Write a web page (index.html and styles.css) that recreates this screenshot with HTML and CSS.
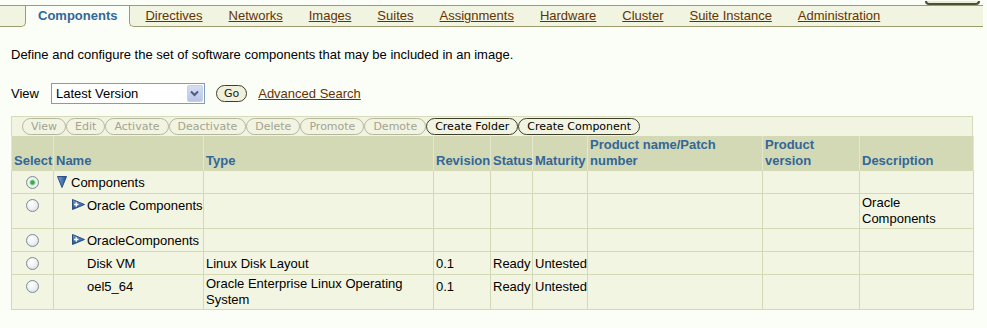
FILE: index.html
```html
<!DOCTYPE html>
<html lang="en">
<head>
    <meta charset="UTF-8">
    <meta name="viewport" content="width=device-width, initial-scale=1.0">
    <title>Components</title>
    <link rel="stylesheet" href="styles.css">
</head>
<body>
    <!-- Global button row (mostly scrolled off the top) -->
    <div class="top-strip"><span class="global-btn"></span></div>

    <!-- Tabs -->
    <nav class="tabs">
        <span class="tab-edge"></span>
        <a class="tab current" href="#">Components</a>
        <a class="tab after-current" href="#">Directives</a>
        <a class="tab" href="#">Networks</a>
        <a class="tab" href="#">Images</a>
        <a class="tab" href="#">Suites</a>
        <a class="tab" href="#">Assignments</a>
        <a class="tab" href="#">Hardware</a>
        <a class="tab" href="#">Cluster</a>
        <a class="tab" href="#">Suite Instance</a>
        <a class="tab" href="#">Administration</a>
        <span class="tab-fill"></span>
    </nav>

    <p class="intro">Define and configure the set of software components that may be included in an image.</p>

    <form class="view-row" onsubmit="return false">
        <label class="view-label" for="view-select">View</label>
        <div class="select-box">
            <select id="view-select">
                <option>Latest Version</option>
                <option>All Versions</option>
            </select>
            <span class="select-arrow">
                <svg width="9" height="7" viewBox="0 0 9 7"><path d="M1 1.5 L4.5 5 L8 1.5" fill="none" stroke="#4d5c7a" stroke-width="2"/></svg>
            </span>
        </div>
        <button class="btn go-btn">Go</button>
        <a class="adv-link" href="#">Advanced Search</a>
    </form>

    <div class="toolbar">
        <button class="btn" disabled>View</button>
        <button class="btn" disabled>Edit</button>
        <button class="btn" disabled>Activate</button>
        <button class="btn" disabled>Deactivate</button>
        <button class="btn" disabled>Delete</button>
        <button class="btn" disabled>Promote</button>
        <button class="btn" disabled>Demote</button>
        <button class="btn">Create Folder</button>
        <button class="btn">Create Component</button>
    </div>

    <table class="grid">
        <colgroup>
            <col style="width:42px">
            <col style="width:150px">
            <col style="width:230px">
            <col style="width:57px">
            <col style="width:42px">
            <col style="width:55px">
            <col style="width:175px">
            <col style="width:97px">
            <col style="width:114px">
        </colgroup>
        <thead>
            <tr>
                <th>Select</th>
                <th>Name</th>
                <th>Type</th>
                <th>Revision</th>
                <th>Status</th>
                <th>Maturity</th>
                <th>Product name/Patch number</th>
                <th>Product version</th>
                <th>Description</th>
            </tr>
        </thead>
        <tbody>
            <tr>
                <td class="sel"><input class="pick" type="radio" name="comp" checked></td>
                <td class="name">
                    <svg class="twisty" width="10" height="12" viewBox="0 0 10 12">
                        <defs><linearGradient id="down-g" x1="0" x2="1"><stop offset="0" stop-color="#7aa3d6"/><stop offset="1" stop-color="#1f4f92"/></linearGradient></defs>
                        <polygon points="0.5,0.5 9.5,0.5 5,11.5" fill="url(#down-g)" stroke="#2a4f86"/>
                    </svg>Components
                </td>
                <td></td><td></td><td></td><td></td><td></td><td></td><td></td>
            </tr>
            <tr>
                <td class="sel"><input class="pick" type="radio" name="comp"></td>
                <td class="name lvl1">
                    <svg class="expand" width="13" height="11" viewBox="0 0 13 11">
                        <defs><linearGradient id="exp-g1" x1="0" y1="0" x2="0" y2="1"><stop offset="0" stop-color="#6f98d0"/><stop offset="1" stop-color="#234f90"/></linearGradient></defs>
                        <polygon points="0.5,0.5 12.5,5.5 0.5,10.5" fill="url(#exp-g1)" stroke="#2a4f86"/>
                        <path d="M2 5.5 H6.5 M4.25 3.2 V7.8" stroke="#fff" stroke-width="1.3"/>
                    </svg>Oracle Components
                </td>
                <td></td><td></td><td></td><td></td><td></td><td></td>
                <td class="multi">Oracle Components</td>
            </tr>
            <tr>
                <td class="sel"><input class="pick" type="radio" name="comp"></td>
                <td class="name lvl1">
                    <svg class="expand" width="13" height="11" viewBox="0 0 13 11">
                        <defs><linearGradient id="exp-g2" x1="0" y1="0" x2="0" y2="1"><stop offset="0" stop-color="#6f98d0"/><stop offset="1" stop-color="#234f90"/></linearGradient></defs>
                        <polygon points="0.5,0.5 12.5,5.5 0.5,10.5" fill="url(#exp-g2)" stroke="#2a4f86"/>
                        <path d="M2 5.5 H6.5 M4.25 3.2 V7.8" stroke="#fff" stroke-width="1.3"/>
                    </svg>OracleComponents
                </td>
                <td></td><td></td><td></td><td></td><td></td><td></td><td></td>
            </tr>
            <tr>
                <td class="sel"><input class="pick" type="radio" name="comp"></td>
                <td class="name leaf">Disk VM</td>
                <td>Linux Disk Layout</td>
                <td>0.1</td>
                <td>Ready</td>
                <td>Untested</td>
                <td></td><td></td><td></td>
            </tr>
            <tr>
                <td class="sel"><input class="pick" type="radio" name="comp"></td>
                <td class="name leaf">oel5_64</td>
                <td class="multi">Oracle Enterprise Linux Operating System</td>
                <td>0.1</td>
                <td>Ready</td>
                <td>Untested</td>
                <td></td><td></td><td></td>
            </tr>
        </tbody>
    </table>
</body>
</html>
```

FILE: styles.css
```css
body {
    margin: 0;
    background: #fbfdf7;
    font-family: 'Liberation Sans', Arial, sans-serif;
    font-size: 13px;
    color: #000;
}
a {
    color: #663300;
}

/* top strip with the cut-off global button */
.top-strip {
    height: 5px;
    overflow: hidden;
    display: flex;
    justify-content: flex-end;
    align-items: flex-end;
    padding-right: 7px;
}
.global-btn {
    width: 55px;
    height: 4px;
    box-sizing: border-box;
    background: #e9ebd6;
    border: 2px solid #4e4e30;
    border-top: none;
    border-radius: 0 0 5px 5px;
}

/* tabs */
.tabs {
    display: flex;
    margin-right: 4px;
    border-top: 1px solid #9c9c6e;
}
.tab-edge,
.tab,
.tab-fill {
    box-sizing: border-box;
    height: 21px;
    background: #f1f4e1;
    border-bottom: 1px solid #9c9c6e;
}
.tab-edge {
    width: 26px;
    border-right: 1px solid #9c9c6e;
    border-bottom-right-radius: 5px;
}
.tab {
    padding: 0 13px;
    line-height: 20px;
    color: #663300;
}
.tab.current {
    padding: 0 12px;
    background: transparent;
    border-bottom: none;
    color: #336699;
    font-weight: bold;
    text-decoration: none;
}
.tab.after-current {
    padding-left: 15px;
    border-left: 1px solid #9c9c6e;
    border-bottom-left-radius: 5px;
}
.tab-fill {
    flex: 1;
}

.intro {
    margin: 20px 0 0 11px;
    line-height: 16px;
}

/* view selector row */
.view-row {
    display: flex;
    align-items: center;
    margin: 20px 0 0 11px;
    height: 21px;
}
.view-label {
    margin-right: 12px;
}
.select-box {
    display: flex;
    align-items: center;
    box-sizing: border-box;
    width: 154px;
    height: 21px;
    border: 1px solid #7f9db9;
    background: #fff;
}
.select-box select {
    flex: 1;
    min-width: 0;
    appearance: none;
    -webkit-appearance: none;
    border: none;
    outline: none;
    background: transparent;
    font-family: inherit;
    font-size: 13px;
    color: #000;
    padding: 0 0 0 4px;
    margin: 0;
}
.select-arrow {
    display: flex;
    align-items: center;
    justify-content: center;
    box-sizing: border-box;
    width: 16px;
    height: 17px;
    margin-right: 1px;
    background: linear-gradient(#d6def3, #b9c5e6);
    border: 1px solid #c3d0ee;
    border-radius: 2px;
}
.btn {
    font-family: 'DejaVu Sans', Tahoma, sans-serif;
    font-size: 11px;
    height: 17px;
    line-height: 15px;
    padding: 0 8px;
    margin: 0;
    border: 1px solid #3e3e2a;
    border-radius: 9px;
    background: transparent;
    color: #000;
    cursor: pointer;
}
.btn:disabled {
    border-color: #b6b69e;
    color: #a3a390;
    cursor: default;
}
.go-btn {
    margin-left: 11px;
    padding: 0 7px;
    background: #f0f1dd;
    color: #222;
}
.adv-link {
    margin-left: 11px;
}

/* action toolbar */
.toolbar {
    display: flex;
    box-sizing: border-box;
    width: 962px;
    height: 20px;
    margin: 12px 0 0 11px;
    padding: 1px 10px 0;
    background: #f2f4e2;
    border: 1px solid #d6dbb9;
    border-bottom: none;
}

/* results table */
.grid {
    margin-left: 11px;
    width: 962px;
    table-layout: fixed;
    border-collapse: collapse;
}
.grid th {
    background: #d2d9b4;
    color: #336699;
    font-weight: bold;
    text-align: left;
    vertical-align: bottom;
    line-height: 16px;
    padding: 1px 2px;
    border-left: 1px solid #e3e7cd;
    border-right: 1px solid #e3e7cd;
}
.grid td {
    background: #f2f5e2;
    border: 1px solid #d2d9b4;
    line-height: 16px;
    padding: 4px 2px 2px;
    vertical-align: top;
}
.grid td.multi {
    padding: 1px 2px;
}
.grid td.sel {
    text-align: center;
}
.grid td.name {
    white-space: nowrap;
}
.pick {
    appearance: none;
    -webkit-appearance: none;
    width: 13px;
    height: 13px;
    margin: 1px 0 0;
    vertical-align: top;
    border: 1px solid #7d8b98;
    border-radius: 50%;
    background: radial-gradient(circle at 40% 35%, #ffffff 0, #eef0f1 50%, #cfd4d8 100%);
}
.pick:checked {
    background: radial-gradient(circle, #35ad44 0, #35ad44 1.6px, #a9dcae 2.6px, #f4f6f2 3.6px, #d9dee1 100%);
}
.twisty,
.expand {
    vertical-align: top;
    margin-top: 1px;
}
.twisty {
    margin-left: 1px;
    margin-right: 4px;
}
.name.lvl1 {
    padding-left: 18px;
}
.expand {
    margin-right: 2px;
}
.name.leaf {
    padding-left: 33px;
}
```
